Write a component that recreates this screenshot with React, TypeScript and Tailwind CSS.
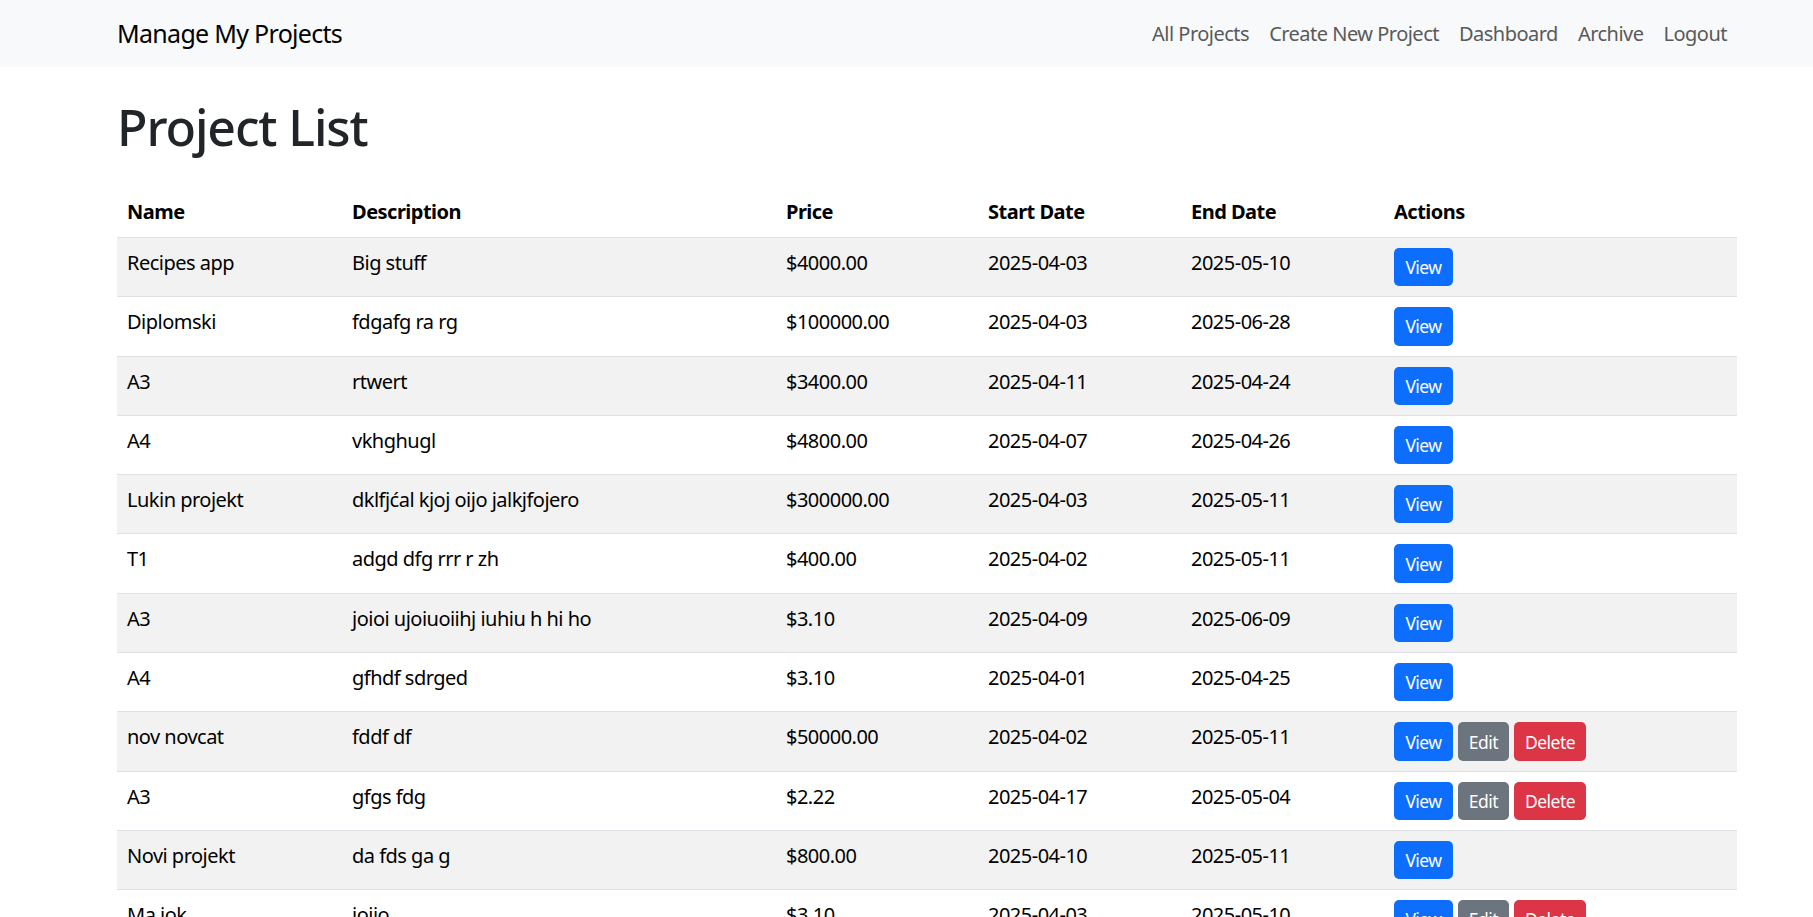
import React from "react";

interface Project {
  name: string;
  description: string;
  price: string;
  startDate: string;
  endDate: string;
  owner: boolean;
}

const projects: Project[] = [
  { name: "Recipes app", description: "Big stuff", price: "$4000.00", startDate: "2025-04-03", endDate: "2025-05-10", owner: false },
  { name: "Diplomski", description: "fdgafg ra rg", price: "$100000.00", startDate: "2025-04-03", endDate: "2025-06-28", owner: false },
  { name: "A3", description: "rtwert", price: "$3400.00", startDate: "2025-04-11", endDate: "2025-04-24", owner: false },
  { name: "A4", description: "vkhghugl", price: "$4800.00", startDate: "2025-04-07", endDate: "2025-04-26", owner: false },
  { name: "Lukin projekt", description: "dklfjćal kjoj oijo jalkjfojero", price: "$300000.00", startDate: "2025-04-03", endDate: "2025-05-11", owner: false },
  { name: "T1", description: "adgd dfg rrr r zh", price: "$400.00", startDate: "2025-04-02", endDate: "2025-05-11", owner: false },
  { name: "A3", description: "joioi ujoiuoiihj iuhiu h hi ho", price: "$3.10", startDate: "2025-04-09", endDate: "2025-06-09", owner: false },
  { name: "A4", description: "gfhdf sdrged", price: "$3.10", startDate: "2025-04-01", endDate: "2025-04-25", owner: false },
  { name: "nov novcat", description: "fddf df", price: "$50000.00", startDate: "2025-04-02", endDate: "2025-05-11", owner: true },
  { name: "A3", description: "gfgs fdg", price: "$2.22", startDate: "2025-04-17", endDate: "2025-05-04", owner: true },
  { name: "Novi projekt", description: "da fds ga g", price: "$800.00", startDate: "2025-04-10", endDate: "2025-05-11", owner: false },
  { name: "Ma jok", description: "jojio", price: "$3.10", startDate: "2025-04-03", endDate: "2025-05-10", owner: true },
];

const navLinks = ["All Projects", "Create New Project", "Dashboard", "Archive", "Logout"];

export default function App() {
  return (
    <div className="min-h-screen bg-white font-['Noto_Sans',sans-serif] text-[#212529] tracking-[-0.032em]">
      {/* Navbar */}
      <nav className="h-[67px] bg-[#f8f9fa]">
        <div className="ml-[117px] w-[1620px] h-full flex items-center justify-between">
          <a href="#" className="text-[25px] leading-[37px] text-black tracking-[-0.028em]">Manage My Projects</a>
          <ul className="flex">
            {navLinks.map((link) => (
              <li key={link}>
                <a href="#" className="block px-[10px] text-[20px] leading-[30px] text-[#585a5c]">
                  {link}
                </a>
              </li>
            ))}
          </ul>
        </div>
      </nav>

      <main className="ml-[117px] w-[1620px] pt-[30px]">
        <h1 className="text-[50px] leading-[60px] font-medium text-[#212529] mb-[30px] tracking-[-0.022em]">Project List</h1>

        <table className="w-full table-fixed border-collapse text-[20px] leading-[30px] text-black">
          <colgroup>
            <col className="w-[225px]" />
            <col className="w-[434px]" />
            <col className="w-[202px]" />
            <col className="w-[203px]" />
            <col className="w-[203px]" />
            <col className="w-[353px]" />
          </colgroup>
          <thead>
            <tr className="border-b border-[#dee2e6]">
              <th className="p-[10px] text-left font-bold">Name</th>
              <th className="p-[10px] text-left font-bold">Description</th>
              <th className="p-[10px] text-left font-bold">Price</th>
              <th className="p-[10px] text-left font-bold">Start Date</th>
              <th className="p-[10px] text-left font-bold">End Date</th>
              <th className="p-[10px] text-left font-bold">Actions</th>
            </tr>
          </thead>
          <tbody>
            {projects.map((p, i) => (
              <tr key={i} className={`border-b border-[#dee2e6] ${i % 2 === 0 ? "bg-[#f2f2f2]" : "bg-white"}`}>
                <td className="p-[10px] align-top">{p.name}</td>
                <td className="p-[10px] align-top">{p.description}</td>
                <td className="p-[10px] align-top">{p.price}</td>
                <td className="p-[10px] align-top">{p.startDate}</td>
                <td className="p-[10px] align-top">{p.endDate}</td>
                <td className="p-[10px] align-top">
                  <div className="flex gap-[5px]">
                    <button className="w-[59px] h-[38.3px] rounded-[5px] bg-[#0d6efd] text-white text-[17.5px] leading-[26px]">View</button>
                    {p.owner && (
                      <>
                        <button className="w-[51px] h-[38.3px] rounded-[5px] bg-[#6c757d] text-white text-[17.5px] leading-[26px]">Edit</button>
                        <button className="w-[72px] h-[38.3px] rounded-[5px] bg-[#dc3545] text-white text-[17.5px] leading-[26px]">Delete</button>
                      </>
                    )}
                  </div>
                </td>
              </tr>
            ))}
          </tbody>
        </table>
      </main>
    </div>
  );
}
